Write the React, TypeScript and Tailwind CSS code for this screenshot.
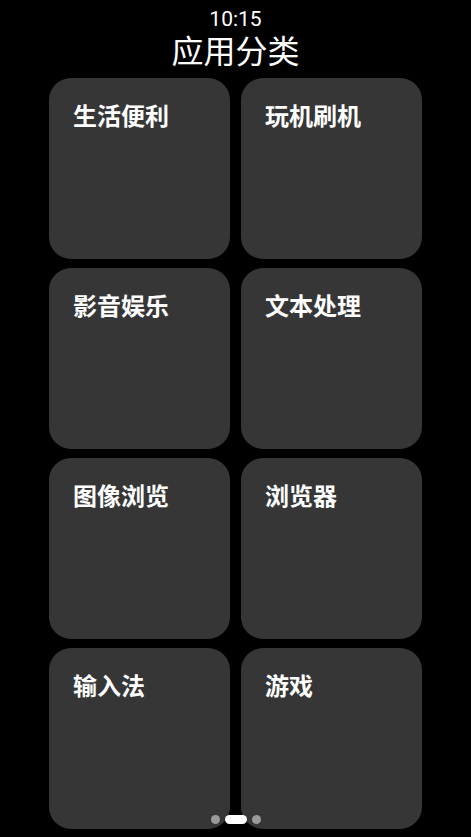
import React from 'react';

const categories = ['生活便利', '玩机刷机', '影音娱乐', '文本处理', '图像浏览', '浏览器', '输入法', '游戏'];

export default function App() {
  return (
    <div
      className="relative h-[837px] w-[471px] overflow-hidden bg-black text-white"
      style={{ fontFamily: 'Roboto, "Noto Sans CJK SC", sans-serif' }}
    >
      {/* Header */}
      <div className="flex flex-col items-center">
        <div className="mt-[6px] text-[21px] leading-[26px]">10:15</div>
        <h1 className="mt-0 text-[32px] leading-[40px] font-normal">应用分类</h1>
      </div>

      {/* Grid */}
      <div className="mt-[6px] grid grid-cols-[181px_181px] gap-x-[11px] gap-y-[9px] pl-[49px]">
        {categories.map((name) => (
          <div key={name} className="h-[181px] rounded-[22px] bg-[#363636] pl-6 pt-[23px]">
            <div className="text-[24px] leading-8 font-bold">{name}</div>
          </div>
        ))}
      </div>

      {/* Page dots */}
      <div className="absolute bottom-[13px] left-0 right-0 flex items-center justify-center gap-[5px]">
        <span className="h-[9px] w-[9px] rounded-full bg-[#9a9a9a]" />
        <span className="h-[9px] w-[22px] rounded-full bg-white" />
        <span className="h-[9px] w-[9px] rounded-full bg-[#9a9a9a]" />
      </div>
    </div>
  );
}
